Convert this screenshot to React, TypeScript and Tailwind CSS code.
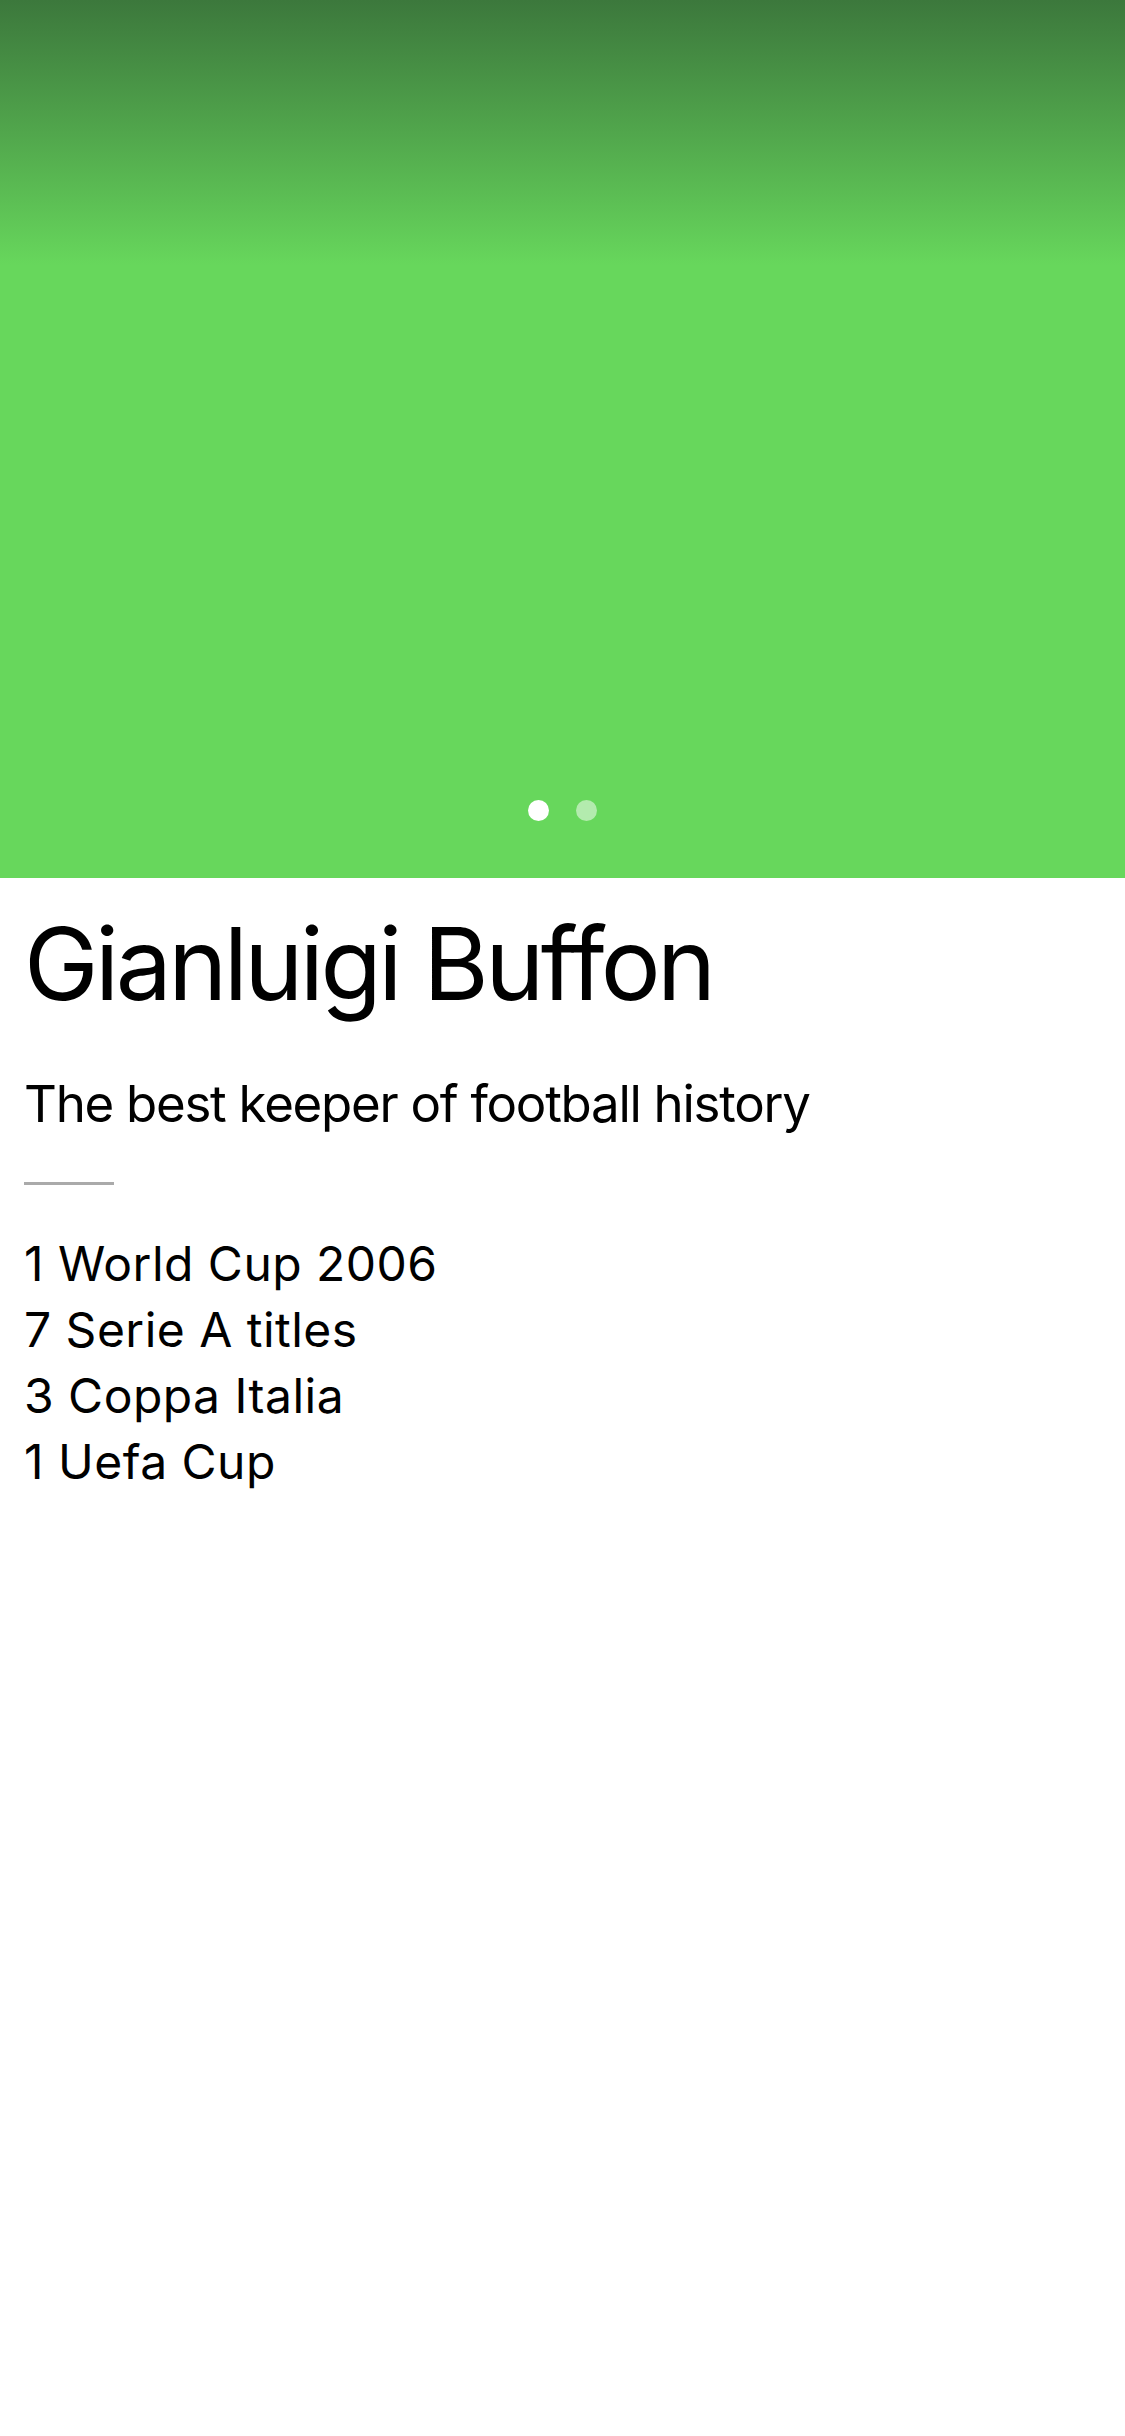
import React from "react";

const trophies = ["1 World Cup 2006", "7 Serie A titles", "3 Coppa Italia", "1 Uefa Cup"];

function Carousel() {
  return (
    <div className="relative h-[878px] w-full bg-[#67d75c]">
      <div className="h-[265px] w-full bg-gradient-to-b from-[#3c783c] to-[#67d75c]" />
      <div className="absolute bottom-[57px] left-0 right-0 flex items-center justify-center gap-[27px]">
        <span className="h-[21px] w-[21px] rounded-full bg-white" />
        <span className="h-[21px] w-[21px] rounded-full bg-white/50" />
      </div>
    </div>
  );
}

export default function App() {
  return (
    <div className="min-h-[2436px] w-[1125px] bg-white font-['Inter',sans-serif] text-black">
      <Carousel />
      <div className="px-[24px]">
        <h1 className="mt-[26px] text-[100px] font-normal leading-[120px] tracking-[-0.036em]">
          Gianluigi Buffon
        </h1>
        <p className="mt-[49px] text-[51px] leading-[62px] tracking-[-0.025em]">
          The best keeper of football history
        </p>
        <div className="mt-[47px] h-[3px] w-[90px] bg-[#aaaaaa]" />
        <ul className="mt-[46px]">
          {trophies.map((t) => (
            <li key={t} className="text-[48px] leading-[66px] tracking-[0.01em]">
              {t}
            </li>
          ))}
        </ul>
      </div>
    </div>
  );
}
